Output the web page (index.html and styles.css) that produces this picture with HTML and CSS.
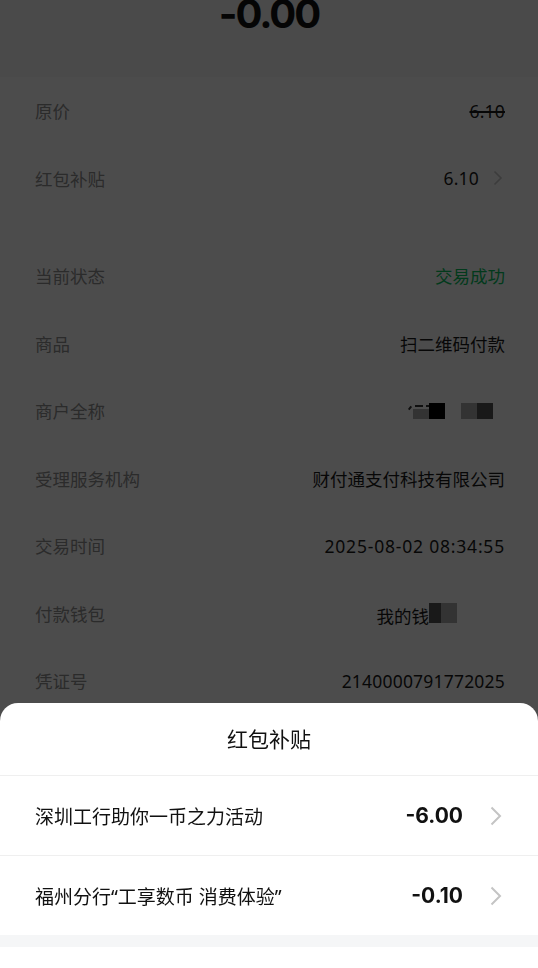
FILE: index.html
```html
<!DOCTYPE html>
<html lang="zh-CN">
<head>
    <meta charset="UTF-8">
    <meta name="viewport" content="width=device-width, initial-scale=1.0">
    <title>账单详情</title>
    <link rel="stylesheet" href="styles.css">
</head>
<body>
    <div class="page">
        <!-- 金额 -->
        <div class="header">
            <div class="amount">-0.00</div>
        </div>

        <div class="row">
            <span class="label">原价</span>
            <span class="value num strike">6.10</span>
        </div>
        <div class="row">
            <span class="label">红包补贴</span>
            <span class="value link">
                <span class="num">6.10</span>
                <svg class="arrow-sm" width="10" height="16" viewBox="0 0 10 16"><path d="M1.5 1.5 L8 8 L1.5 14.5" fill="none" stroke="#c8c8c8" stroke-width="1.6"/></svg>
            </span>
        </div>

        <div class="gap"></div>

        <div class="row">
            <span class="label">当前状态</span>
            <span class="value green">交易成功</span>
        </div>
        <div class="row">
            <span class="label">商品</span>
            <span class="value">扫二维码付款</span>
        </div>
        <div class="row">
            <span class="label">商户全称</span>
            <span class="value mask">
                <!-- 打码后残留的笔画 -->
                <span class="stroke-bits">
                    <span class="bit bit-a"></span>
                    <span class="bit bit-b"></span>
                    <span class="bit bit-c"></span>
                </span>
                <span class="blk blk-gray low"></span>
                <span class="blk blk-black"></span>
                <span class="blk-space"></span>
                <span class="blk blk-gray"></span>
                <span class="blk blk-dark"></span>
                <span class="blk-space short"></span>
            </span>
        </div>
        <div class="row">
            <span class="label">受理服务机构</span>
            <span class="value">财付通支付科技有限公司</span>
        </div>
        <div class="row">
            <span class="label">交易时间</span>
            <span class="value num date">2025-08-02 08:34:55</span>
        </div>
        <div class="row">
            <span class="label">付款钱包</span>
            <span class="value mask">
                我的钱<span class="blk blk-dark narrow"></span><span class="blk blk-gray wide"></span><span class="blk-space"></span><span class="blk-space"></span><span class="blk-space"></span>
            </span>
        </div>
        <div class="row">
            <span class="label">凭证号</span>
            <span class="value num">2140000791772025</span>
        </div>
        <div class="row">
            <span class="label">商户单号</span>
            <span class="value">可在支持的商户扫码退款</span>
        </div>
    </div>

    <!-- 遮罩 -->
    <div class="mask-layer"></div>

    <!-- 底部弹窗 -->
    <div class="sheet">
        <div class="sheet-title">红包补贴</div>
        <div class="sheet-row">
            <span class="sheet-name">深圳工行助你一币之力活动</span>
            <span class="sheet-amount">-6.00</span>
            <svg class="arrow" width="12" height="20" viewBox="0 0 12 20"><path d="M1.5 1.5 L10 10 L1.5 18.5" fill="none" stroke="#c4c4c4" stroke-width="2"/></svg>
        </div>
        <div class="sheet-row">
            <span class="sheet-name">福州分行“工享数币 消费体验”</span>
            <span class="sheet-amount">-0.10</span>
            <svg class="arrow" width="12" height="20" viewBox="0 0 12 20"><path d="M1.5 1.5 L10 10 L1.5 18.5" fill="none" stroke="#c4c4c4" stroke-width="2"/></svg>
        </div>
        <div class="sheet-band"></div>
        <div class="sheet-foot"></div>
    </div>
</body>
</html>
```

FILE: styles.css
```css
html, body {
    margin: 0;
    height: 100%;
    overflow: hidden;
    background-color: #fff;
    font-family: "Noto Sans", "Noto Sans CJK SC", sans-serif;
}

/* 账单本体（已向上滚动一点） */
.page {
    margin-top: -6px;
}

.header {
    background-color: #f7f7f7;
    padding-bottom: 43px;
    text-align: center;
}

.amount {
    font-family: Inter, "Noto Sans", sans-serif;
    font-weight: 700;
    font-size: 40px;
    line-height: 40px;
    color: #111;
    letter-spacing: -2px;
}

.row {
    display: flex;
    align-items: center;
    justify-content: space-between;
    height: 67.5px;
    padding: 0 33px 0 35px;
    font-size: 17.5px;
}

.label {
    color: #919191;
}

.value {
    color: #1a1a1a;
    display: flex;
    align-items: center;
}

.num {
    letter-spacing: 0.2px;
}

.date {
    letter-spacing: 0.8px;
}

.strike {
    text-decoration: line-through;
    text-decoration-thickness: 1.5px;
}

.link .num {
    margin-right: 14px;
}

.arrow-sm {
    margin-right: 2px;
}

.green {
    color: #07c160;
}

.gap {
    height: 30px;
}

/* 打码 */
.mask {
    height: 20px;
    align-items: flex-start;
}

.stroke-bits {
    display: inline-flex;
    align-items: flex-start;
    gap: 3px;
    width: 32px;
    height: 10px;
    margin-right: -27px;
    padding-top: 4px;
}

.bit {
    display: inline-block;
    height: 2px;
    background-color: #333;
}

.bit-a { width: 4px; margin-top: 2px; transform: rotate(-50deg); }
.bit-b { width: 8px; }
.bit-c { width: 12px; }

.blk {
    display: inline-block;
    width: 16px;
    height: 16px;
    margin-top: 2px;
}

.blk.low {
    height: 10px;
    margin-top: 8px;
}

.blk-gray { background-color: #aaa; }
.blk-dark { background-color: #555; }
.blk-black { background-color: #000; }

.blk-space {
    display: inline-block;
    width: 16px;
}

.blk-space.short {
    width: 12px;
}

.blk.narrow { width: 12px; height: 20px; margin-top: 0; }
.blk.wide { width: 16px; height: 20px; margin-top: 0; }

.mask-layer {
    position: fixed;
    inset: 0;
    background-color: rgba(0, 0, 0, 0.7);
}

/* 底部弹窗 */
.sheet {
    position: fixed;
    left: 0;
    right: 0;
    bottom: 0;
    background-color: #fff;
    border-radius: 18px 18px 0 0;
    overflow: hidden;
}

.sheet-title {
    height: 72px;
    line-height: 72px;
    text-align: center;
    font-size: 21px;
    color: #111;
}

.sheet-row {
    box-sizing: border-box;
    height: 80px;
    border-top: 1px solid #efefef;
    display: flex;
    align-items: center;
    padding: 0 36px 0 35px;
}

.sheet-name {
    flex: 1;
    font-size: 19px;
    color: #111;
}

.sheet-amount {
    font-family: Inter, "Noto Sans", sans-serif;
    font-weight: 700;
    font-size: 21px;
    color: #111;
    margin-right: 27px;
}

.sheet-band {
    height: 12px;
    background-color: #f5f6f7;
}

.sheet-foot {
    height: 21px;
}
```
